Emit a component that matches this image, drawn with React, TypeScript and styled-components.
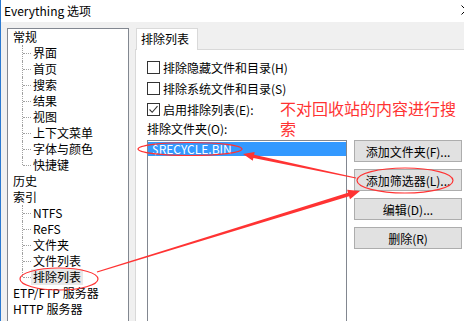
import React from 'react';
import styled, { createGlobalStyle } from 'styled-components';

const GlobalStyle = createGlobalStyle`
  html, body {
    margin: 0;
    padding: 0;
    background: #fff;
  }
  body {
    font-family: "Noto Sans CJK SC", sans-serif;
    font-size: 12px;
    color: #000;
  }
`;

type TreeNode = {
  label: string;
  child?: boolean;
  last?: boolean;
  selected?: boolean;
};

const treeItems: TreeNode[] = [
  { label: '常规' },
  { label: '界面', child: true },
  { label: '首页', child: true },
  { label: '搜索', child: true },
  { label: '结果', child: true },
  { label: '视图', child: true },
  { label: '上下文菜单', child: true },
  { label: '字体与颜色', child: true },
  { label: '快捷键', child: true, last: true },
  { label: '历史' },
  { label: '索引' },
  { label: 'NTFS', child: true },
  { label: 'ReFS', child: true },
  { label: '文件夹', child: true },
  { label: '文件列表', child: true },
  { label: '排除列表', child: true, last: true, selected: true },
  { label: 'ETP/FTP 服务器' },
  { label: 'HTTP 服务器' },
];

const checks = [
  { label: '排除隐藏文件和目录(H)', checked: false },
  { label: '排除系统文件和目录(S)', checked: false },
  { label: '启用排除列表(E):', checked: true },
];

const buttons = ['添加文件夹(F)...', '添加筛选器(L)...', '编辑(D)...', '删除(R)'];

// tapered arrow like the screenshot tool draws: thin tail, thick end, barbed head
const arrow = (
  x1: number,
  y1: number,
  x2: number,
  y2: number,
  w1: number,
  w2: number,
  headLen: number,
  headW: number
) => {
  const len = Math.hypot(x2 - x1, y2 - y1);
  const ux = (x2 - x1) / len;
  const uy = (y2 - y1) / len;
  const nx = -uy;
  const ny = ux;
  const bx = x2 - ux * headLen;
  const by = y2 - uy * headLen;
  const p = (x: number, y: number) => `${x.toFixed(1)},${y.toFixed(1)}`;
  return [
    p(x1 + (nx * w1) / 2, y1 + (ny * w1) / 2),
    p(bx + (nx * w2) / 2, by + (ny * w2) / 2),
    p(bx + (nx * headW) / 2, by + (ny * headW) / 2),
    p(x2, y2),
    p(bx - (nx * headW) / 2, by - (ny * headW) / 2),
    p(bx - (nx * w2) / 2, by - (ny * w2) / 2),
    p(x1 - (nx * w1) / 2, y1 - (ny * w1) / 2),
  ].join(' ');
};

const App = () => {
  return (
    <Screen>
      <GlobalStyle />
      <Window>
        <TitleBar>
          <Title>Everything 选项</Title>
          <CloseIcon width="10" height="10" viewBox="0 0 10 10">
            <path d="M0.5 0.5 L9.5 9.5 M9.5 0.5 L0.5 9.5" stroke="#000" strokeWidth="1" />
          </CloseIcon>
        </TitleBar>
        <Body>
          <Tree>
            {treeItems.map((item) => (
              <TreeRow key={item.label} child={item.child}>
                {item.child && <Connector last={item.last} />}
                <TreeLabel selected={item.selected}>{item.label}</TreeLabel>
              </TreeRow>
            ))}
          </Tree>
          <Right>
            <Tabs>
              <Tab>排除列表</Tab>
            </Tabs>
            <Panel>
              {checks.map((c) => (
                <CheckRow key={c.label}>
                  <Box>
                    {c.checked && (
                      <svg width="11" height="11" viewBox="0 0 11 11">
                        <path d="M1.5 5.5 L4.2 8.3 L9.5 2.2" fill="none" stroke="#333" strokeWidth="1.1" />
                      </svg>
                    )}
                  </Box>
                  <span>{c.label}</span>
                </CheckRow>
              ))}
              <FolderLabel>排除文件夹(O):</FolderLabel>
              <ListRow>
                <ListBox>
                  <ListItem selected>$RECYCLE.BIN</ListItem>
                </ListBox>
                <ButtonColumn>
                  {buttons.map((b) => (
                    <Button key={b}>{b}</Button>
                  ))}
                </ButtonColumn>
              </ListRow>
            </Panel>
          </Right>
        </Body>
      </Window>

      <Note>不对回收站的内容进行搜索</Note>
      <Marks width="464" height="321" viewBox="0 0 464 321">
        <g fill="none" stroke="#f33" strokeWidth="1.2">
          <ellipse cx="59" cy="279" rx="39" ry="11" />
          <ellipse cx="190" cy="149" rx="52" ry="6.5" />
          <ellipse cx="405" cy="180.5" rx="48" ry="12.5" />
        </g>
        <g fill="#f33">
          <polygon points={arrow(97, 272, 360, 191, 1.2, 3.6, 12, 10)} />
          <polygon points={arrow(356, 178, 243, 154, 1, 3.2, 11, 9)} />
        </g>
      </Marks>
    </Screen>
  );
};

const Screen = styled.div`
  position: relative;
  width: 464px;
  height: 321px;
  overflow: hidden;
`;

const Window = styled.div`
  width: 464px;
  height: 321px;
  box-sizing: border-box;
  border-left: 1px solid #2b79d0;
  background: #f0f0f0;
  display: flex;
  flex-direction: column;
`;

const TitleBar = styled.div`
  height: 22px;
  flex-shrink: 0;
  background: #fff;
  display: flex;
  align-items: center;
  justify-content: space-between;
  padding-left: 3px;
`;

const Title = styled.span`
  font-size: 12px;
  line-height: 16px;
`;

const CloseIcon = styled.svg`
  margin-right: -7px;
  margin-top: -3px;
`;

const Body = styled.div`
  flex: 1;
  display: flex;
  align-items: flex-start;
  gap: 6px;
  padding: 6px 0 0 6px;
`;

const Tree = styled.div`
  width: 122px;
  height: 310px;
  flex-shrink: 0;
  box-sizing: border-box;
  border: 1px solid #828790;
  background: #fff;
`;

const TreeRow = styled.div<{ child?: boolean }>`
  height: 16px;
  display: flex;
  align-items: center;
  padding-left: ${(p) => (p.child ? '14px' : '3px')};
`;

const Connector = styled.span<{ last?: boolean }>`
  position: relative;
  width: 9px;
  align-self: stretch;
  flex-shrink: 0;

  &::before {
    content: '';
    position: absolute;
    left: 0;
    top: 0;
    height: ${(p) => (p.last ? '8px' : '16px')};
    border-left: 1px dotted #a0a0a0;
  }

  &::after {
    content: '';
    position: absolute;
    left: 1px;
    top: 8px;
    width: 8px;
    border-top: 1px dotted #a0a0a0;
  }
`;

const TreeLabel = styled.span<{ selected?: boolean }>`
  padding: 0 2px;
  line-height: 16px;
  white-space: nowrap;
  background: ${(p) => (p.selected ? '#e8e8e8' : 'transparent')};
`;

const Right = styled.div`
  width: 340px;
  flex-shrink: 0;
  display: flex;
  flex-direction: column;
`;

const Tabs = styled.div`
  display: flex;
  height: 21px;
  padding-left: 1px;
`;

const Tab = styled.div`
  width: 62px;
  box-sizing: border-box;
  border: 1px solid #d9d9d9;
  border-bottom: none;
  background: #fff;
  padding-left: 4px;
  line-height: 20px;
  margin-bottom: -1px;
  position: relative;
  z-index: 1;
`;

const Panel = styled.div`
  height: 300px;
  border: 1px solid #d9d9d9;
  background: #fff;
  padding: 7px 0 0 11px;
`;

const CheckRow = styled.div`
  height: 21px;
  display: flex;
  align-items: center;
  gap: 3px;
`;

const Box = styled.span`
  width: 13px;
  height: 13px;
  box-sizing: border-box;
  border: 1px solid #333;
  background: #fff;
  display: flex;
  align-items: center;
  justify-content: center;
`;

const FolderLabel = styled.div`
  height: 18px;
  line-height: 18px;
`;

const ListRow = styled.div`
  display: flex;
  gap: 7px;
  margin-top: 2px;
`;

const ListBox = styled.div`
  width: 200px;
  height: 200px;
  box-sizing: border-box;
  border: 1px solid #828790;
  padding-top: 1px;
`;

const ListItem = styled.div<{ selected?: boolean }>`
  height: 14px;
  line-height: 14px;
  padding-left: 4px;
  background: ${(p) => (p.selected ? '#3399ff' : 'transparent')};
  color: ${(p) => (p.selected ? '#fff' : '#000')};
`;

const ButtonColumn = styled.div`
  display: flex;
  flex-direction: column;
  gap: 7px;
`;

const Button = styled.div`
  width: 108px;
  height: 22px;
  box-sizing: border-box;
  border: 1px solid #adadad;
  background: #e1e1e1;
  display: flex;
  align-items: center;
  justify-content: center;
`;

const Note = styled.div`
  position: absolute;
  left: 280px;
  top: 98px;
  width: 184px;
  font-size: 16px;
  line-height: 20px;
  color: #f33;
`;

const Marks = styled.svg`
  position: absolute;
  left: 0;
  top: 0;
  pointer-events: none;
`;

export default App;
